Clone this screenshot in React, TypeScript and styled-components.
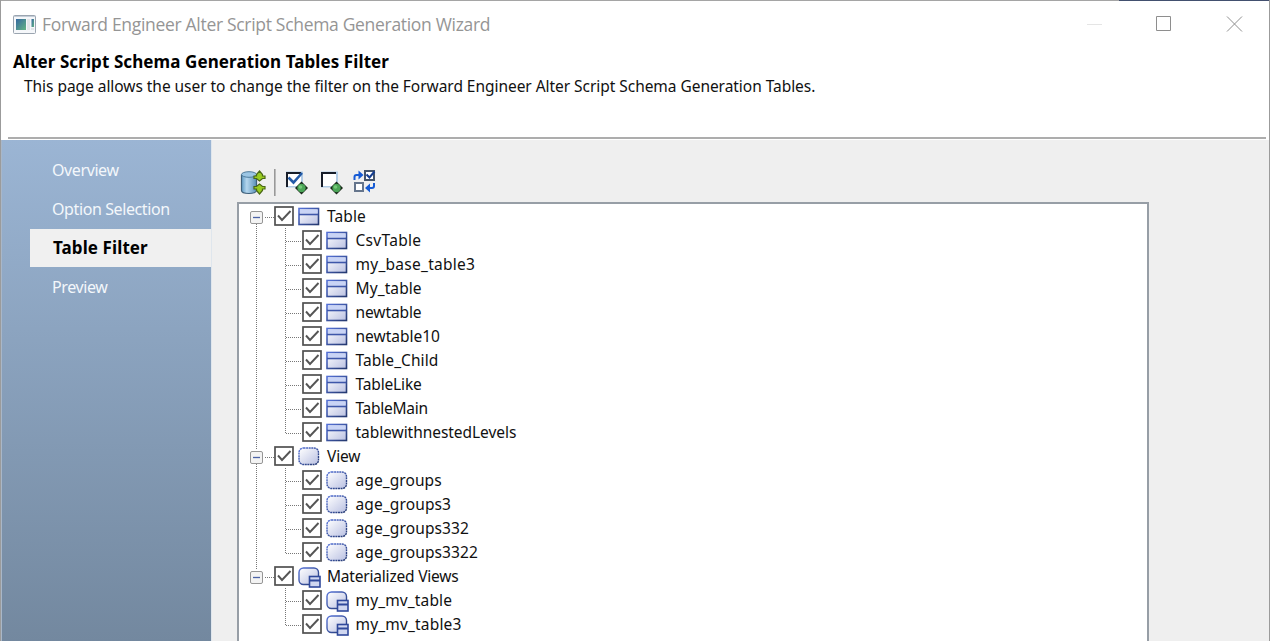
import React from 'react';
import styled, { createGlobalStyle, css } from 'styled-components';

const GlobalStyle = createGlobalStyle`
  * { box-sizing: border-box; }
  body { margin: 0; background: #fff; overflow: hidden; font-family: 'Noto Sans', 'Open Sans', sans-serif; }
  svg { display: block; flex: none; }
`;

const Window = styled.div`
  display: flex;
  flex-direction: column;
  width: 1270px;
  height: 641px;
  background: #fff;
  border-left: 1px solid #9b9b9b;
  border-right: 1px solid #9b9b9b;
  overflow: hidden;
`;

const TopEdge = styled.div`
  height: 1px;
  flex: none;
  background: linear-gradient(90deg, #a5a5a5 1118px, #42506f 1118px);
`;

const TitleBar = styled.header`
  display: flex;
  align-items: center;
  height: 46px;
  flex: none;
  padding-left: 12px;
`;

const Title = styled.h1`
  flex: 1;
  margin: 0 0 0 6px;
  font: 400 17.5px/24px 'Open Sans', sans-serif;
  letter-spacing: -0.31px;
  color: #959595;
`;

const WindowControls = styled.div`
  display: flex;
  gap: 54px;
  padding-right: 26px;
`;

const Intro = styled.section`
  height: 90px;
  flex: none;
  padding: 4px 12px 0;
  white-space: nowrap;
  color: #000;
`;

const Heading = styled.h2`
  margin: 0 0 1px;
  font-size: 17px;
  line-height: 22px;
  font-weight: 700;
  letter-spacing: 0.09px;
`;

const Description = styled.p`
  margin: 0 0 0 11px;
  font-size: 15.5px;
  line-height: 25px;
  letter-spacing: -0.045px;
  color: #111;
`;

const Divider = styled.div`
  height: 3px;
  flex: none;
  margin: 0 3px 0 7px;
  border-top: 2px solid #adadad;
`;

const Body = styled.div`
  display: flex;
  flex: 1;
  min-height: 0;
  background: #efefef;
`;

const Sidebar = styled.nav`
  display: flex;
  flex-direction: column;
  gap: 1px;
  width: 211px;
  flex: none;
  padding: 11px 0 0 28px;
  border-left: 1px solid #a9b7c8;
  border-right: 1px solid #dfe6ed;
  background: linear-gradient(#9bb5d4, #73889f);
`;

const Step = styled.div<{ $active?: boolean }>`
  height: 38px;
  padding-left: 22px;
  font-size: 16px;
  line-height: 38px;
  letter-spacing: -0.4px;
  color: #f3f7fb;
  ${p => p.$active && css`
    background: #f0f0f0;
    color: #000;
    font-size: 17px;
    font-weight: 700;
    letter-spacing: 0.1px;
    line-height: 37px;
    padding-left: 23px;
  `}
`;

const Content = styled.main`
  display: flex;
  flex-direction: column;
  padding: 29px 0 0 25px;
`;

const Toolbar = styled.div`
  display: flex;
  align-items: flex-start;
  height: 33px;
  padding-left: 3px;
`;

const Separator = styled.div`
  width: 2px;
  height: 27px;
  margin: 0 8px;
  border-left: 1px solid #999;
  border-right: 1px solid #bbb;
`;

const ToolGroup = styled.div`
  display: flex;
  gap: 9px;
  margin-right: 8px;
`;

const Tree = styled.div`
  width: 912px;
  height: 440px;
  padding: 0 0 0 11px;
  border: 2px solid #979ea6;
  border-bottom: 0;
  background: #fff;
`;

const Row = styled.div`
  display: flex;
  align-items: flex-start;
  height: 24px;
`;

const RowIcon = styled.div`
  margin: 2px 0 0 4px;
`;

const Label = styled.span<{ $root?: boolean; $tracking: number }>`
  margin-left: ${p => (p.$root ? 6 : 6.5)}px;
  font-size: 15.5px;
  line-height: 24px;
  letter-spacing: ${p => p.$tracking}px;
  white-space: nowrap;
  color: #111;
`;

type Kind = 'table' | 'view' | 'mview';

const AppIcon = () => (
  <svg width="23" height="19" viewBox="0 0 23 19">
    <defs><linearGradient id="app" x2="1" y2="1"><stop stopColor="#3467a0" /><stop offset="1" stopColor="#64b583" /></linearGradient></defs>
    <rect x=".5" y=".5" width="22" height="18" rx="1" fill="#f5f7fa" stroke="#9ba5b0" />
    <path d="M1 1.5h21" stroke="#c4cdd7" />
    <path fill="url(#app)" d="M3 4h10v11H3z" />
    <path fill="#e2e5e8" d="M14 4h3v11h-3zM18 13h3v2h-3z" />
    <path fill="url(#app)" d="M18.5 4H21v8h-2.500z" />
  </svg>
);

const DatabaseIcon = () => (
  <svg width="26" height="26" viewBox="0 0 26 26">
    <defs><linearGradient id="db"><stop stopColor="#5f9bc4" /><stop offset=".35" stopColor="#b4d6ee" /><stop offset="1" stopColor="#5b91b8" /></linearGradient></defs>
    <path d="M1.500 5.500v16c0 4 15 4 15 0v-16" fill="url(#db)" stroke="#3e5f7a" strokeWidth="1.200" />
    <ellipse cx="9" cy="5.500" rx="7.500" ry="2.800" fill="#9cc6e4" stroke="#4f7c9c" />
    <path d="M19.500 2l3 3.500V7h2.500v2.500h-2.500l-3 2.500-3-2.500H14V7h2.500V5.500zM19.500 25l3-3.500V20h2.500v-2.500h-2.500l-3-2.500-3 2.500H14V20h2.500v1.500z" fill="#99cc22" stroke="#4a6816" strokeWidth="1.200" />
  </svg>
);

const SelectIcon = ({ checked }: { checked?: boolean }) => (
  <svg width="26" height="26" viewBox="0 0 26 26">
    <path d="M2 2.500h17v16H2z" fill="#b2cce6" />
    <path d="M3 18V4h14" fill="none" stroke="#171d29" strokeWidth="2" />
    <path d="M4 5h13v12H4z" fill="#fff" />
    {checked && <path d="M4.500 8.500l5 5L18 4" fill="none" stroke="#235aa7" strokeWidth="2.600" />}
    <path d="M17.500 12.500l6.500 6.500-6.500 6.500-6.500-6.500z" fill="#182719" />
    <circle cx="17.500" cy="19" r="4.200" fill="#4ba557" />
    <circle cx="16.500" cy="18" r="1.800" fill="#74ca78" />
  </svg>
);

const InvertIcon = () => (
  <svg width="24" height="26" viewBox="0 0 24 26">
    <path d="M12 2h9v9h-9z" fill="#fff" stroke="#45556b" strokeWidth="2" />
    <path d="M13.500 5.500l3 3 5-6" fill="none" stroke="#153e91" strokeWidth="2" />
    <path d="M2 14h8v8H2z" fill="#fff" stroke="#65758c" strokeWidth="2" />
    <path d="M1.500 11V8q0-2 2-2h4" fill="none" stroke="#165bd5" strokeWidth="2" />
    <path d="M5.500 1.500l5 4.500-5 4.500zM17 14.500L12 19l5 4.500z" fill="#165bd5" />
    <path d="M16 19h3q2 0 2-2v-3" fill="none" stroke="#165bd5" strokeWidth="2" />
  </svg>
);

const Checkbox = () => (
  <svg width="20" height="24" viewBox="0 0 20 24">
    <rect x="1" y="3" width="18" height="18" fill="#fff" stroke="#505050" strokeWidth="1.700" />
    <path d="M4 11.500l4 4.500L16.500 7" fill="none" stroke="#555" strokeWidth="1.900" />
  </svg>
);

const Branches = ({ root, first, last, end }: { root: boolean; first: boolean; last: boolean; end: boolean }) => (
  <svg width={root ? 24 : 52} height="24" viewBox={root ? '0 0 24 24' : '0 0 52 24'} fill="none" stroke="#777" strokeDasharray="1 1">
    {root ? (
      <>
        {!first && <path d="M6.500 0v6" />}
        {!end && <path d="M6.500 20v4" />}
        <path d="M15 13.500h9" />
        <rect x=".5" y="7.500" width="12" height="12" rx="1.500" fill="#f3f3f3" stroke="#969696" strokeDasharray="none" />
        <path d="M3 13.500h7" stroke="#4b63a7" strokeWidth="1.300" strokeDasharray="none" />
      </>
    ) : (
      <>
        {!end && <path d="M6.500 0v24" />}
        <path d={last ? 'M35.500 0v13' : 'M35.500 0v24'} />
        <path d="M36 13.500h16" />
      </>
    )}
  </svg>
);

const NodeIcon = ({ kind }: { kind: Kind }) => (
  <svg width="23" height="22" viewBox="0 0 23 22">
    <defs>
      <linearGradient id="fill" x2="1" y2="1"><stop stopColor="#fff" /><stop offset="1" stopColor="#b9c0e2" /></linearGradient>
      <linearGradient id="edge" x2="1" y2="1"><stop stopColor="#5572d8" /><stop offset="1" stopColor="#24386f" /></linearGradient>
    </defs>
    {kind === 'table' ? (
      <>
        <rect x="1" y="2.500" width="19.500" height="16" fill="url(#fill)" stroke="url(#edge)" strokeWidth="1.600" />
        <path d="M2 3.500h17.500v4H2z" fill="#c9d4f6" />
        <path d="M1 8.500h19" stroke="#3e57aa" strokeWidth="1.600" />
      </>
    ) : (
      <rect x="1" y="2" width="19.500" height="16.500" rx="4.500" fill="url(#fill)" stroke="url(#edge)" strokeWidth="1.400" strokeDasharray={kind === 'view' ? '2 .6' : undefined} />
    )}
    {kind === 'mview' && (
      <>
        <rect x="11.500" y="10.500" width="10.500" height="10.500" fill="#d0d7f0" stroke="#30499b" strokeWidth="1.600" />
        <path d="M11 14.500h11" stroke="#30499b" strokeWidth="2" />
      </>
    )}
  </svg>
);

const steps = ['Overview', 'Option Selection', 'Table Filter', 'Preview'];

type Entry = { label: string; tracking: number };

const groups: (Entry & { kind: Kind; items: Entry[] })[] = [
  {
    label: 'Table', tracking: 0.1, kind: 'table',
    items: [
      { label: 'CsvTable', tracking: 0.3 },
      { label: 'my_base_table3', tracking: 0.26 },
      { label: 'My_table', tracking: 0.1 },
      { label: 'newtable', tracking: -0.1 },
      { label: 'newtable10', tracking: 0 },
      { label: 'Table_Child', tracking: 0.06 },
      { label: 'TableLike', tracking: -0.15 },
      { label: 'TableMain', tracking: -0.26 },
      { label: 'tablewithnestedLevels', tracking: -0.05 },
    ],
  },
  {
    label: 'View', tracking: -0.15, kind: 'view',
    items: [
      { label: 'age_groups', tracking: 0.08 },
      { label: 'age_groups3', tracking: 0.12 },
      { label: 'age_groups332', tracking: 0.12 },
      { label: 'age_groups3322', tracking: 0.12 },
    ],
  },
  {
    label: 'Materialized Views', tracking: -0.2, kind: 'mview',
    items: [
      { label: 'my_mv_table', tracking: 0.14 },
      { label: 'my_mv_table3', tracking: 0.17 },
    ],
  },
];

const TreeRow = (p: Entry & { kind: Kind; root?: boolean; first?: boolean; last?: boolean; end?: boolean }) => (
  <Row>
    <Branches root={!!p.root} first={!!p.first} last={!!p.last} end={!!p.end} />
    <Checkbox />
    <RowIcon><NodeIcon kind={p.kind} /></RowIcon>
    <Label $root={p.root} $tracking={p.tracking}>{p.label}</Label>
  </Row>
);

export default function App() {
  return (
    <>
      <GlobalStyle />
      <Window>
        <TopEdge />
        <TitleBar>
          <AppIcon />
          <Title>Forward Engineer Alter Script Schema Generation Wizard</Title>
          <WindowControls>
            <svg width="16" height="16"><path d="M1 8.500h15" stroke="#e5e5e5" /></svg>
            <svg width="16" height="16"><path d="M.5.5h14v14H.5z" fill="none" stroke="#8e8e8e" /></svg>
            <svg width="17" height="16"><path d="M1 .5l15 15M16 .5l-15 15" stroke="#8e8e8e" /></svg>
          </WindowControls>
        </TitleBar>
        <Intro>
          <Heading>Alter Script Schema Generation Tables Filter</Heading>
          <Description>This page allows the user to change the filter on the Forward Engineer Alter Script Schema Generation Tables.</Description>
        </Intro>
        <Divider />
        <Body>
          <Sidebar>
            {steps.map(s => <Step key={s} $active={s === 'Table Filter'}>{s}</Step>)}
          </Sidebar>
          <Content>
            <Toolbar>
              <DatabaseIcon />
              <Separator />
              <ToolGroup>
                <SelectIcon checked />
                <SelectIcon />
              </ToolGroup>
              <InvertIcon />
            </Toolbar>
            <Tree>
              {groups.map((g, gi) => (
                <React.Fragment key={g.label}>
                  <TreeRow label={g.label} tracking={g.tracking} kind={g.kind} root first={gi === 0} end={gi === groups.length - 1} />
                  {g.items.map((item, i) => (
                    <TreeRow key={item.label} {...item} kind={g.kind} last={i === g.items.length - 1} end={gi === groups.length - 1} />
                  ))}
                </React.Fragment>
              ))}
            </Tree>
          </Content>
        </Body>
      </Window>
    </>
  );
}
